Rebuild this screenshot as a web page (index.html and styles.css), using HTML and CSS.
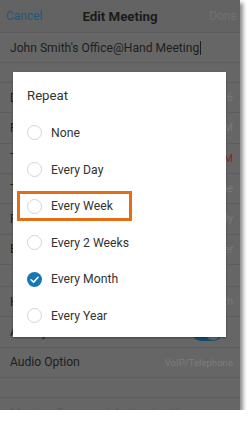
FILE: index.html
```html
<!DOCTYPE html>
<html>
<head>
<meta charset="utf-8">
<link rel="stylesheet" href="styles.css">
</head>
<body>
<div class="screen">
  <div class="header">
    <span class="cancel">Cancel</span>
    <span class="htitle">Edit Meeting</span>
    <span class="done">Done</span>
  </div>
  <div class="topic"><span>John Smith's Office@Hand Meeting</span><span class="cursor"></span></div>
  <div class="gap"></div>
  <div class="row"><span class="label">Date</span><span class="value">Wed, 05/25/2016</span></div>
  <div class="row"><span class="label">From</span><span class="value">10:00 AM</span></div>
  <div class="row"><span class="label">To</span><span class="value red">11:00 AM</span></div>
  <div class="row"><span class="label">Time Zone</span><span class="value">Pacific Time Zone</span></div>
  <div class="row"><span class="label">Repeat</span><span class="value">Monthly</span></div>
  <div class="row"><span class="label">End Repeat</span><span class="value">Never</span></div>
  <div class="gap gap2"></div>
  <div class="row"><span class="label">Host</span><span class="value">John Smith</span></div>
  <div class="row"><span class="label">Allow join before host</span><span class="toggle"><span class="knob"></span></span></div>
  <div class="row"><span class="label">Audio Option</span><span class="value small">VoIP/Telephone</span></div>
  <div class="gap"></div>
  <div class="row faint"><span class="label">Meeting Password Authentication</span></div>

  <div class="dialog">
    <div class="dtitle">Repeat</div>
    <div class="options">
      <div class="opt"><span class="radio"></span><span>None</span></div>
      <div class="opt"><span class="radio"></span><span>Every Day</span></div>
      <div class="opt"><span class="radio"></span><span>Every Week</span><span class="mark"></span></div>
      <div class="opt"><span class="radio"></span><span>Every 2 Weeks</span></div>
      <div class="opt"><span class="radio on"><svg viewBox="0 0 16 16" width="15" height="15"><path d="M4.3 8.2 L7 10.8 L11.8 5.6" fill="none" stroke="#fff" stroke-width="1.6" stroke-linecap="round" stroke-linejoin="round"/></svg></span><span>Every Month</span></div>
      <div class="opt"><span class="radio"></span><span>Every Year</span></div>
    </div>
  </div>
</div>
</body>
</html>
```

FILE: styles.css
```css
html, body {
  margin: 0;
  padding: 0;
  background: #ffffff;
}
body {
  font-family: Roboto, "Liberation Sans", sans-serif;
}
.screen {
  position: relative;
  width: 240px;
  height: 410px;
  overflow: hidden;
  background: #666666;
  box-shadow: 3px 3px 4px rgba(0, 0, 0, 0.45);
}
.header {
  height: 32px;
  border-bottom: 1px solid #5d5d5d;
  display: flex;
  align-items: center;
  justify-content: space-between;
  padding: 0 6px;
  position: relative;
  background: #636363;
}
.cancel {
  font-size: 12px;
  color: #1d5a7b;
}
.htitle {
  position: absolute;
  left: 0;
  right: 0;
  text-align: center;
  font-size: 13.3px;
  font-weight: 700;
  color: #1b1b1b;
  pointer-events: none;
}
.done {
  font-size: 12px;
  color: #707070;
  margin-right: -3px;
}
.topic {
  height: 29px;
  border-bottom: 1px solid #5d5d5d;
  display: flex;
  align-items: center;
  padding-left: 10px;
  font-size: 12.1px;
  color: #1e1e1e;
}
.cursor {
  display: inline-block;
  width: 1px;
  height: 14px;
  background: #1e1e1e;
  margin-left: 1px;
}
.gap {
  height: 19px;
  border-bottom: 1px solid #5d5d5d;
}
.gap2 {
  height: 21px;
}
.row {
  height: 29.33px;
  border-bottom: 1px solid #5d5d5d;
  display: flex;
  align-items: center;
  justify-content: space-between;
  padding: 0 7px 0 10px;
  font-size: 12.1px;
  color: #1e1e1e;
  white-space: nowrap;
}
.value {
  font-size: 10.5px;
  color: #7a7a7a;
}
.value.red {
  color: #8e1e1e;
}
.value.small {
  font-size: 9.6px;
  color: #7d7d7d;
}
.faint {
  color: #5a5a5a;
  border-bottom: none;
}
.toggle {
  position: relative;
  width: 30px;
  height: 18px;
  border-radius: 9px;
  background: #174d6b;
  margin-right: 11px;
}
.knob {
  position: absolute;
  right: 0;
  top: 0;
  width: 16px;
  height: 16px;
  border-radius: 50%;
  background: #6a6a6a;
  border: 1px solid #174d6b;
}
.dialog {
  position: absolute;
  left: 13px;
  top: 72px;
  width: 213px;
  height: 265px;
  box-sizing: border-box;
  background: #ffffff;
  box-shadow: 0 1px 2px rgba(0, 0, 0, 0.35);
  padding-top: 14px;
}
.dtitle {
  padding-left: 14px;
  font-size: 13.2px;
  line-height: 20px;
  color: #333333;
}
.options {
  margin-top: 8.7px;
}
.opt {
  position: relative;
  height: 36.6px;
  display: flex;
  align-items: center;
  padding-left: 14px;
  font-size: 12.2px;
  color: #333333;
}
.radio {
  box-sizing: border-box;
  width: 15px;
  height: 15px;
  border-radius: 50%;
  border: 1px solid #d4d4d4;
  margin-right: 9px;
  display: flex;
  align-items: center;
  justify-content: center;
}
.radio.on {
  border: none;
  background: #1677b5;
}
.mark {
  position: absolute;
  left: 4px;
  top: 3.3px;
  width: 115px;
  height: 30px;
  box-sizing: border-box;
  border: 3px solid #e26f17;
}
```
